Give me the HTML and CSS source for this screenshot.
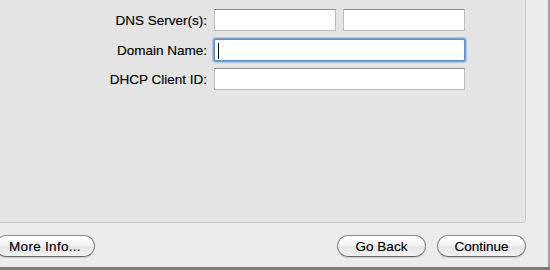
FILE: index.html
```html
<!DOCTYPE html>
<html lang="en">
<head>
    <meta charset="UTF-8">
    <title>Network Settings</title>
    <link rel="stylesheet" href="styles.css">
</head>
<body>

<div class="window">
    <div class="pane">
        <div class="form">
            <label class="field-label">DNS Server(s):</label>
            <div class="field-pair">
                <div class="text-field short"></div>
                <div class="text-field short"></div>
            </div>

            <label class="field-label">Domain Name:</label>
            <div class="text-field wide focused"><span class="caret"></span></div>

            <label class="field-label">DHCP Client ID:</label>
            <div class="text-field wide"></div>
        </div>
    </div>

    <div class="button-bar">
        <button class="push-btn more-info">More Info...</button>
        <div class="nav-buttons">
            <button class="push-btn">Go Back</button>
            <button class="push-btn">Continue</button>
        </div>
    </div>
</div>

</body>
</html>
```

FILE: styles.css
```css
body {
    margin: 0;
    padding: 0;
    background-color: #7a7a7a;
    font-family: "Liberation Sans", Arial, sans-serif;
    font-size: 13px;
    color: #000;
    overflow: hidden;
}
.window {
    width: 548px;
    height: 267px;
    background-color: #ececec;
    border-right: 2px solid #a0a0a0;
}
.pane {
    width: 525px;
    height: 213px;
    padding-top: 9px;
    background-color: #e4e4e4;
    border-right: 1px solid #cbcbcb;
    border-bottom: 1px solid #cbcbcb;
    border-bottom-right-radius: 4px;
}
.form {
    display: grid;
    grid-template-columns: 207px auto;
    grid-template-rows: 30px 29px 22px;
    column-gap: 7px;
    align-items: start;
}
.field-label {
    text-align: right;
    font-size: 13.5px;
    line-height: 23px;
    -webkit-text-stroke: 0.15px #000;
}
.field-pair {
    display: flex;
    gap: 7px;
}
.text-field {
    height: 22px;
    box-sizing: border-box;
    background-color: #fff;
    border: 1px solid #bcbcbc;
    border-top-color: #8c8c8c;
    position: relative;
}
.text-field.short {
    width: 122px;
}
.text-field.wide {
    width: 251px;
}
.text-field.focused {
    border: 1px solid #5b8ecb;
    border-radius: 2px;
    box-shadow: 0 0 0 1px #78a5da, 0 0 1px 2px #a7c4e7;
}
.caret {
    position: absolute;
    left: 3px;
    top: 3px;
    width: 1px;
    height: 16px;
    background-color: #000;
}
.button-bar {
    display: flex;
    justify-content: space-between;
    align-items: center;
    margin-top: 12px;
    padding-right: 22px;
}
.nav-buttons {
    display: flex;
    gap: 11px;
}
.push-btn {
    height: 22px;
    width: 89px;
    padding: 0;
    font-family: "Liberation Sans", Arial, sans-serif;
    font-size: 13.5px;
    color: #000;
    -webkit-text-stroke: 0.15px #000;
    border: 1px solid #8a8a8a;
    border-bottom-color: #6a6a6a;
    border-radius: 11px;
    background: linear-gradient(#ffffff, #f5f5f5 45%, #e6e6e6 55%, #f3f3f3);
    box-shadow: 0 1px 1px rgba(0, 0, 0, 0.15);
    cursor: pointer;
}
.more-info {
    width: 100px;
    margin-left: -5px;
    letter-spacing: 0.3px;
}
```
